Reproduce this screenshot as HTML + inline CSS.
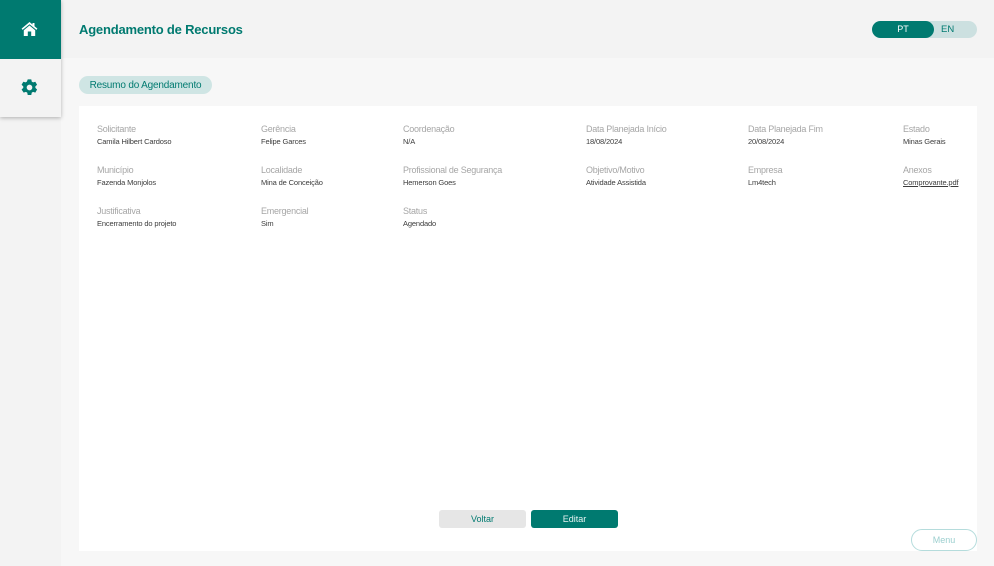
<!DOCTYPE html>
<html lang="pt"><head><meta charset="utf-8"><title>Agendamento de Recursos</title>
<style>
html,body{margin:0;padding:0}
body{position:relative;width:994px;height:566px;overflow:hidden;background:#f7f7f7;font-family:"Liberation Sans",sans-serif}
div,a{position:absolute;white-space:nowrap}
.top{left:0;top:0;width:994px;height:58px;background:#f3f3f3}
.side{left:0;top:0;width:61px;height:117px;background:#f3f3f3;box-shadow:0 1px 4px rgba(0,0,0,.28)}
.sidelow{left:0;top:117px;width:61px;height:449px;background:#f3f3f3}
.home{left:0;top:0;width:61px;height:59px;background:#007a70}
.title{left:79px;top:21px;font-size:13px;line-height:18px;font-weight:bold;color:#007a70;letter-spacing:-.2px}
.tog{left:872px;top:21px;width:105px;height:17px;border-radius:9px;background:#cce0e0}
.pt{left:872px;top:21px;width:62px;height:17px;border-radius:9px;background:#007a70;color:#fff;font-size:9px;line-height:17px;text-align:center}
.en{left:941px;top:21px;font-size:9.5px;line-height:17px;color:#007a70}
.pill{left:79px;top:76px;width:133px;height:18px;border-radius:9px;background:#cfe5e4;color:#007a70;font-size:10px;line-height:19px;text-align:center;letter-spacing:-.18px}
.card{left:79px;top:106px;width:898px;height:445px;background:#fff}
.l{font-size:9px;line-height:12px;color:#a6a6a6;letter-spacing:-.24px}
.v{font-size:7.5px;line-height:10px;color:#3c3c3c;letter-spacing:-.14px}
.btn{top:510px;width:87px;height:18px;border-radius:3px;font-size:9px;line-height:19px;text-align:center}
.menu{left:911px;top:529px;width:64px;height:20px;border:1px solid #b5dcdc;border-radius:11px;background:rgba(255,255,255,.6);color:#9ccfcf;font-size:9px;line-height:21px;text-align:center}
</style></head><body>
<div class="top"></div>
<div class="sidelow"></div>
<div class="side"></div>
<div class="home"></div>
<svg style="position:absolute;left:21px;top:21px" width="17" height="16" viewBox="0 0 17 16"><path fill="#fff" d="M8.5 1 0.6 7.6 1.6 8.9 8.5 3.2 15.4 8.9 16.4 7.6 13.5 5.2V2h-2v1.5z"/><path fill="#fff" d="M8.5 4.5 2.8 9.2V15h4V10.5h3.4V15h4V9.2z"/></svg>
<svg style="position:absolute;left:21px;top:79px" width="17" height="17" viewBox="0 0 24 24"><path fill="#007a70" fill-rule="evenodd" d="M9.5 0.5h5l.7 3.2 1.9 1.1 3.1-1 2.5 4.4-2.4 2.2v2.2l2.4 2.2-2.5 4.4-3.1-1-1.9 1.1-.7 3.2h-5l-.7-3.2-1.9-1.1-3.1 1L.8 14.8l2.4-2.2v-2.2L.8 8.2l2.5-4.4 3.1 1 1.9-1.1zM12 8a4 4 0 1 0 0 8 4 4 0 0 0 0-8z"/></svg>
<div class="title">Agendamento de Recursos</div>
<div class="tog"></div><div class="pt">PT</div><div class="en">EN</div>
<div class="pill">Resumo do Agendamento</div>
<div class="card"></div>

<div class="l" style="left:97px;top:123px">Solicitante</div><div class="v" style="left:97px;top:137px">Camila Hilbert Cardoso</div>
<div class="l" style="left:261px;top:123px">Gerência</div><div class="v" style="left:261px;top:137px">Felipe Garces</div>
<div class="l" style="left:403px;top:123px">Coordenação</div><div class="v" style="left:403px;top:137px">N/A</div>
<div class="l" style="left:586px;top:123px">Data Planejada Início</div><div class="v" style="left:586px;top:137px">18/08/2024</div>
<div class="l" style="left:748px;top:123px">Data Planejada Fim</div><div class="v" style="left:748px;top:137px">20/08/2024</div>
<div class="l" style="left:903px;top:123px">Estado</div><div class="v" style="left:903px;top:137px">Minas Gerais</div>

<div class="l" style="left:97px;top:164px">Município</div><div class="v" style="left:97px;top:178px">Fazenda Monjolos</div>
<div class="l" style="left:261px;top:164px">Localidade</div><div class="v" style="left:261px;top:178px">Mina de Conceição</div>
<div class="l" style="left:403px;top:164px">Profissional de Segurança</div><div class="v" style="left:403px;top:178px">Hemerson Goes</div>
<div class="l" style="left:586px;top:164px">Objetivo/Motivo</div><div class="v" style="left:586px;top:178px">Atividade Assistida</div>
<div class="l" style="left:748px;top:164px">Empresa</div><div class="v" style="left:748px;top:178px">Lm4tech</div>
<div class="l" style="left:903px;top:164px">Anexos</div><a class="v" style="left:903px;top:178px;text-decoration:underline">Comprovante.pdf</a>

<div class="l" style="left:97px;top:205px">Justificativa</div><div class="v" style="left:97px;top:219px">Encerramento do projeto</div>
<div class="l" style="left:261px;top:205px">Emergencial</div><div class="v" style="left:261px;top:219px">Sim</div>
<div class="l" style="left:403px;top:205px">Status</div><div class="v" style="left:403px;top:219px">Agendado</div>

<div class="btn" style="left:439px;background:#e6e6e6;color:#007a70">Voltar</div>
<div class="btn" style="left:531px;background:#007a70;color:#e6f2f1">Editar</div>
<div class="menu">Menu</div>
</body></html>
